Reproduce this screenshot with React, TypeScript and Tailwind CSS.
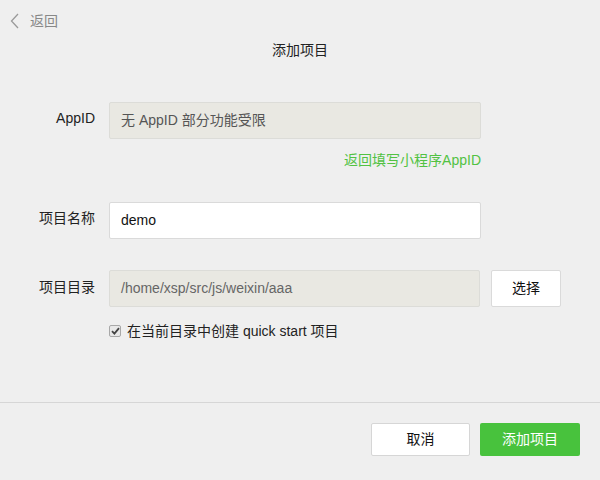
import React from "react";

const font = "font-['Liberation_Sans','Noto_Sans_CJK_SC',sans-serif]";

function Label({ text, pad }: { text: string; pad: string }) {
  return (
    <div className={`w-[95px] shrink-0 text-right text-[14px] leading-[20px] text-[#222] ${pad}`}>
      {text}
    </div>
  );
}

export default function App() {
  return (
    <div className={`flex h-[480px] w-[600px] flex-col bg-[#efefef] ${font}`}>
      {/* back */}
      <div className="flex h-[42px] items-center pl-[10px]">
        <svg width="9" height="16" viewBox="0 0 9 16" fill="none">
          <path d="M8 1 L1.5 8 L8 15" stroke="#9a9a9a" strokeWidth="1.3" />
        </svg>
        <span className="ml-[11px] text-[14px] leading-[20px] text-[#888]">返回</span>
      </div>

      <div className="h-[16px] text-center text-[14px] leading-[16px] text-[#222]">添加项目</div>

      {/* AppID */}
      <div className="mt-[44px] flex items-start">
        <Label text="AppID" pad="pt-[6px]" />
        <div className="ml-[14px] flex h-[37px] w-[372px] items-center rounded-[2px] border border-[#dcdcd8] bg-[#e9e8e2] px-[11px] text-[14px] text-[#555]">
          无 AppID 部分功能受限
        </div>
      </div>
      <div className="mt-[11px] flex h-[20px] w-[481px] items-center justify-end text-[14px] text-[#52c243]">
        返回填写小程序AppID
      </div>

      {/* name */}
      <div className="mt-[32px] flex items-start">
        <Label text="项目名称" pad="pt-[6px]" />
        <div className="ml-[14px] flex h-[37px] w-[372px] items-center rounded-[2px] border border-[#dadada] bg-white px-[11px] text-[14px] text-[#111]">
          demo
        </div>
      </div>

      {/* dir */}
      <div className="mt-[31px] flex items-start">
        <Label text="项目目录" pad="pt-[7px]" />
        <div className="ml-[14px] flex h-[37px] w-[371px] items-center rounded-[2px] border border-[#dcdcd8] bg-[#e9e8e2] px-[11px] text-[14px] text-[#666]">
          /home/xsp/src/js/weixin/aaa
        </div>
        <button className="ml-[11px] flex h-[37px] w-[70px] items-center justify-center rounded-[2px] border border-[#dadada] bg-white text-[14px] text-[#111]">
          选择
        </button>
      </div>

      <div className="ml-[109px] mt-[14px] flex h-[20px] items-center">
        <span className="flex h-[12px] w-[12px] items-center justify-center rounded-[2px] border border-[#a8a8a8] bg-[#e8e8e8]">
          <svg width="9" height="8" viewBox="0 0 9 8" fill="none">
            <path d="M1 4.2 L3.4 6.6 L8 1.2" stroke="#444" strokeWidth="1.8" />
          </svg>
        </span>
        <span className="ml-[6px] text-[14px] text-[#222]">在当前目录中创建 quick start 项目</span>
      </div>

      {/* footer */}
      <div className="mt-[61px] border-t border-[#d6d6d6]" />
      <div className="mt-[20px] flex justify-end gap-[10px] pr-[20px]">
        <button className="flex h-[33px] w-[99px] items-center justify-center rounded-[2px] border border-[#d6d6d6] bg-white text-[14px] text-[#111]">
          取消
        </button>
        <button className="flex h-[33px] w-[100px] items-center justify-center rounded-[2px] bg-[#48c23d] text-[14px] text-white">
          添加项目
        </button>
      </div>
    </div>
  );
}
